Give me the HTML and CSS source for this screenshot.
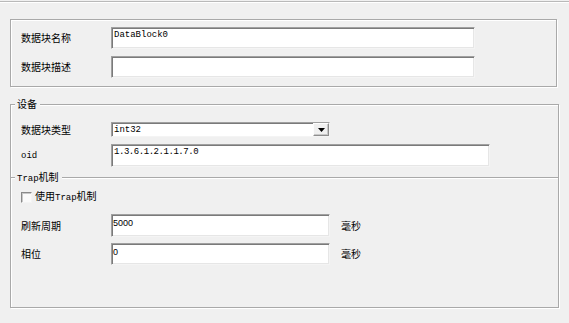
FILE: index.html
```html
<!DOCTYPE html>
<html lang="zh-CN">
<head>
<meta charset="utf-8">
<title>数据块</title>
<link rel="stylesheet" href="styles.css">
</head>
<body>
<div class="topline"></div>
<div class="page">
  <div class="group g1">
    <div class="row">
      <span class="label">数据块名称</span>
      <div class="field w364 mono">DataBlock0</div>
    </div>
    <div class="row gap7">
      <span class="label">数据块描述</span>
      <div class="field w364"></div>
    </div>
  </div>

  <div class="group g2">
    <div class="legend">设备</div>
    <div class="row r-combo">
      <span class="label">数据块类型</span>
      <div class="combo">
        <span class="combo-val mono">int32</span>
        <span class="combo-btn"><svg width="7" height="4" viewBox="0 0 7 4"><polygon points="0,0 7,0 3.5,4" fill="#000"/></svg></span>
      </div>
    </div>
    <div class="row gap7">
      <span class="label mono">oid</span>
      <div class="field w379 h23 mono oid">1.3.6.1.2.1.1.7.0</div>
    </div>

    <div class="subgroup">
      <div class="legend"><span class="mono">Trap</span>机制</div>
      <div class="check-row">
        <span class="checkbox"></span>
        <span class="check-label">使用<span class="mono">Trap</span>机制</span>
      </div>
      <div class="row r-refresh">
        <span class="label">刷新周期</span>
        <div class="field w219 h23 sans">5000</div>
        <span class="unit">毫秒</span>
      </div>
      <div class="row r-phase">
        <span class="label">相位</span>
        <div class="field w219 sans">0</div>
        <span class="unit">毫秒</span>
      </div>
    </div>
  </div>
</div>
</body>
</html>
```
FILE: styles.css
```css
* { box-sizing: border-box; }
html, body {
  margin: 0;
  padding: 0;
}
body {
  width: 569px;
  height: 323px;
  overflow: hidden;
  background: #f0f0f0;
  color: #000;
  font-family: "Noto Sans CJK SC", "Liberation Sans", sans-serif;
  font-size: 10px;
  line-height: 14px;
}
.mono {
  font-family: "Liberation Mono", "Noto Sans CJK SC", monospace;
  font-size: 9px;
}
.sans {
  font-family: "Liberation Sans", sans-serif;
  font-size: 9px;
}
.topline {
  margin-top: 1px;
  height: 2px;
  border-top: 1px solid #b9b9b9;
  border-bottom: 1px solid #ffffff;
}
.page {
  padding-left: 10px;
}
.group {
  border: 1px solid #a9a9a9;
  box-shadow: 1px 1px 0 #fff, inset 1px 1px 0 #fff;
}
.g1 {
  width: 547px;
  margin-top: 16px;
  padding: 7px 0 8px 0;
}
.g2 {
  width: 549px;
  margin-top: 17px;
}
.legend {
  width: fit-content;
  margin: -8px 0 0 4px;
  padding: 0 3px 0 2px;
  line-height: 14px;
  height: 14px;
  background: #f0f0f0;
}
.row {
  display: flex;
  align-items: center;
}
.gap7 { margin-top: 7px; }
.label {
  width: 100px;
  padding-left: 10px;
  flex: none;
}
.label.mono { font-size: 9px; }
.field {
  height: 22px;
  background: #fff;
  border: 1px solid;
  border-color: #a0a0a0 #f4f4f4 #f4f4f4 #a0a0a0;
  box-shadow: inset 1px 1px 0 #7a7a7a, inset -1px -1px 0 #e6e6e6;
  padding: 2px 0 0 2px;
  line-height: 11px;
  white-space: nowrap;
  overflow: hidden;
}
.field.sans { padding-left: 1px; padding-top: 3px; }
.h23 { height: 23px; }
.w364 { width: 364px; }
.w379 { width: 379px; }
.w219 { width: 219px; }
.oid { letter-spacing: -0.45px; }

.r-combo { margin-top: 11px; }
.combo {
  width: 219px;
  height: 15px;
  display: flex;
  align-items: center;
  background: #fff;
  border: 1px solid;
  border-color: #a0a0a0 #f4f4f4 #f4f4f4 #a0a0a0;
  box-shadow: inset 1px 1px 0 #7a7a7a;
}
.combo-val {
  flex: 1;
  padding-left: 2px;
  line-height: 12px;
}
.combo-btn {
  width: 16px;
  height: 13px;
  margin-right: 0;
  display: flex;
  align-items: center;
  justify-content: center;
  background: #f0f0f0;
  border: 1px solid;
  border-color: #fdfdfd #8e8e8e #8e8e8e #fdfdfd;
  box-shadow: inset -1px -1px 0 #c8c8c8;
}
.combo-btn svg { display: block; }

.subgroup {
  margin-top: 10px;
  border-top: 1px solid #a9a9a9;
  box-shadow: inset 0 1px 0 #fff;
  padding-bottom: 42px;
}
.check-row {
  display: flex;
  align-items: center;
  height: 14px;
  margin-top: 6px;
  padding-left: 10px;
}
.checkbox {
  width: 11px;
  height: 11px;
  flex: none;
  background: #fafafa;
  border: 1px solid;
  border-color: #8a8a8a #f4f4f4 #f4f4f4 #8a8a8a;
  box-shadow: inset 1px 1px 0 #c8c8c8;
}
.check-label { margin-left: 3px; }
.r-refresh { margin-top: 10px; }
.r-phase { margin-top: 6px; }
.unit { margin-left: 11px; }
```
